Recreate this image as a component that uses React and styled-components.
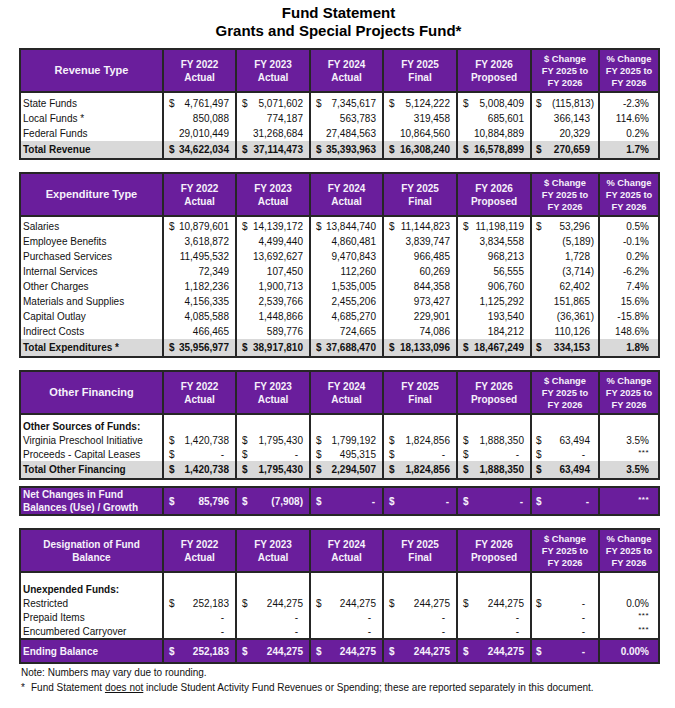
import React from "react";
import styled, { createGlobalStyle } from "styled-components";

const PURPLE = "#6a1e9c";
const LINE = "#262626";
const GREY = "#d9d9d9";

const GlobalStyle = createGlobalStyle`
  body {
    margin: 0;
    background: #fff;
    font-family: "Liberation Sans", Arial, sans-serif;
    color: #111;
  }
`;

const Page = styled.div`
  width: 675px;
  box-sizing: border-box;
  padding: 4px 17px 0 19px;
`;

const Title = styled.h1`
  margin: 0 0 8px;
  text-align: center;
  font-size: 15px;
  line-height: 18px;
  font-weight: bold;
  color: #000;
`;

const Table = styled.table`
  width: 639px;
  table-layout: fixed;
  border-collapse: collapse;
  border: 2px solid ${LINE};
  margin-bottom: ${p => p.$gap}px;
`;

const HeadCell = styled.th`
  background: ${PURPLE};
  color: #f6f1fb;
  font-weight: bold;
  font-size: ${p => p.$size}px;
  line-height: ${p => p.$lh}px;
  text-align: center;
  vertical-align: middle;
  border: 2px solid ${LINE};
  padding: 0 2px;
  height: ${p => p.$h}px;
`;

const Row = styled.tr`
  height: ${p => p.$h}px;
  background: ${p =>
    p.$tone === "total" ? GREY : p.$tone === "purple" ? PURPLE : "#fff"};
  color: ${p => (p.$tone === "purple" ? "#f6f1fb" : "#111")};
  font-weight: ${p => (p.$tone === "item" ? "normal" : "bold")};
`;

const Cell = styled.td`
  border-left: 2px solid ${LINE};
  border-right: 2px solid ${LINE};
  border-top: ${p => (p.$top ? `2px solid ${LINE}` : "none")};
  padding: 0 ${p => p.$pr}px 0 ${p => p.$pl}px;
  font-size: 10px;
  line-height: ${p => p.$lh || 13}px;
  white-space: nowrap;
  text-align: ${p => p.$align || "left"};
  vertical-align: middle;
  overflow: hidden;
`;

const Money = styled.div`
  display: flex;
  justify-content: space-between;
  align-items: baseline;
`;

const Dash = styled.span`
  margin-right: ${p => (p.$tight ? 1 : 5)}px;
`;

const Neg = styled.span`
  margin-right: ${p => (p.$shift ? -4 : 0)}px;
`;

const Stars = styled.span`
  font-size: 8px;
  letter-spacing: 0.5px;
  position: relative;
  top: -2px;
`;

const Notes = styled.div`
  font-size: 10px;
  line-height: 15px;
  color: #111;
  padding: 1px 0 0 2px;
`;

const Star = styled.span`
  display: inline-block;
  width: 10px;
`;

const cols = [143, 73, 74, 73, 74, 74, 68, 60];

const yearHeads = [
  ["FY 2022", "Actual"],
  ["FY 2023", "Actual"],
  ["FY 2024", "Actual"],
  ["FY 2025", "Final"],
  ["FY 2026", "Proposed"]
];

const Lines = ({ lines }) =>
  lines.map((l, i) => (
    <React.Fragment key={i}>
      {i > 0 && <br />}
      {l}
    </React.Fragment>
  ));

function Head({ label, labelSize }) {
  return (
    <thead>
      <tr>
        <HeadCell $size={labelSize} $lh={13} $h={41}>
          <Lines lines={label} />
        </HeadCell>
        {yearHeads.map(h => (
          <HeadCell key={h[0]} $size={10} $lh={13} $h={41}>
            <Lines lines={h} />
          </HeadCell>
        ))}
        <HeadCell $size={9.3} $lh={12} $h={41}>
          <Lines lines={["$ Change", "FY 2025 to", "FY 2026"]} />
        </HeadCell>
        <HeadCell $size={9.3} $lh={12} $h={41}>
          <Lines lines={["% Change", "FY 2025 to", "FY 2026"]} />
        </HeadCell>
      </tr>
    </thead>
  );
}

function Value({ text, col, tight }) {
  let dollar = false;
  let v = text;
  if (v.startsWith("$")) {
    dollar = true;
    v = v.slice(1);
  }
  let shown;
  if (v === "-") shown = <Dash $tight={tight}>-</Dash>;
  else if (v.startsWith("(")) shown = <Neg $shift={col === 6}>{v}</Neg>;
  else shown = <span>{v}</span>;
  return (
    <Money>
      <span>{dollar ? "$" : ""}</span>
      {shown}
    </Money>
  );
}

function DataRow({ row, h, top }) {
  const [label, ...vals] = row.cells;
  return (
    <Row $h={h} $tone={row.tone}>
      <Cell $pl={2} $pr={2} $top={top} $lh={row.lh}>
        {label}
      </Cell>
      {vals.map((v, i) => {
        const col = i + 1;
        if (col === 7) {
          return (
            <Cell key={i} $pl={2} $pr={9} $align="right" $top={top}>
              {v === "***" ? <Stars>***</Stars> : v}
            </Cell>
          );
        }
        return (
          <Cell key={i} $pl={col === 6 ? 4 : 5} $pr={col === 6 ? 8 : 6} $top={top}>
            {v !== "" && <Value text={v} col={col} tight={row.tightDash} />}
          </Cell>
        );
      })}
    </Row>
  );
}

function Spacer({ h }) {
  return (
    <Row $h={h} $tone="item">
      {cols.map((c, i) => (
        <Cell key={i} $pl={0} $pr={0} $lh={1} />
      ))}
    </Row>
  );
}

function Section({ label, labelSize = 11, pad, rows, rowH, total, totalH, totalTop, gap }) {
  return (
    <Table $gap={gap}>
      <colgroup>
        {cols.map((w, i) => (
          <col key={i} style={{ width: w }} />
        ))}
      </colgroup>
      <Head label={label} labelSize={labelSize} />
      <tbody>
        <Spacer h={pad} />
        {rows.map((r, i) => (
          <DataRow key={i} row={r} h={rowH} />
        ))}
        <DataRow row={total} h={totalH} top={totalTop} />
      </tbody>
    </Table>
  );
}

const item = cells => ({ tone: "item", cells });
const sub = label => ({ tone: "sub", cells: [label, "", "", "", "", "", "", ""] });

const revenue = [
  item(["State Funds", "$4,761,497", "$5,071,602", "$7,345,617", "$5,124,222", "$5,008,409", "$(115,813)", "-2.3%"]),
  item(["Local Funds *", "850,088", "774,187", "563,783", "319,458", "685,601", "366,143", "114.6%"]),
  item(["Federal Funds", "29,010,449", "31,268,684", "27,484,563", "10,864,560", "10,884,889", "20,329", "0.2%"])
];

const expenditures = [
  item(["Salaries", "$10,879,601", "$14,139,172", "$13,844,740", "$11,144,823", "$11,198,119", "$53,296", "0.5%"]),
  item(["Employee Benefits", "3,618,872", "4,499,440", "4,860,481", "3,839,747", "3,834,558", "(5,189)", "-0.1%"]),
  item(["Purchased Services", "11,495,532", "13,692,627", "9,470,843", "966,485", "968,213", "1,728", "0.2%"]),
  item(["Internal Services", "72,349", "107,450", "112,260", "60,269", "56,555", "(3,714)", "-6.2%"]),
  item(["Other Charges", "1,182,236", "1,900,713", "1,535,005", "844,358", "906,760", "62,402", "7.4%"]),
  item(["Materials and Supplies", "4,156,335", "2,539,766", "2,455,206", "973,427", "1,125,292", "151,865", "15.6%"]),
  item(["Capital Outlay", "4,085,588", "1,448,866", "4,685,270", "229,901", "193,540", "(36,361)", "-15.8%"]),
  item(["Indirect Costs", "466,465", "589,776", "724,665", "74,086", "184,212", "110,126", "148.6%"])
];

const financing = [
  sub("Other Sources of Funds:"),
  item(["Virginia Preschool Initiative", "$1,420,738", "$1,795,430", "$1,799,192", "$1,824,856", "$1,888,350", "$63,494", "3.5%"]),
  item(["Proceeds - Capital Leases", "$-", "$-", "$495,315", "$-", "$-", "$-", "***"])
];

const designation = [
  sub("Unexpended Funds:"),
  item(["Restricted", "$252,183", "$244,275", "$244,275", "$244,275", "$244,275", "$-", "0.0%"]),
  item(["Prepaid Items", "-", "-", "-", "-", "-", "-", "***"]),
  item(["Encumbered Carryover", "-", "-", "-", "-", "-", "-", "***"])
];

const netRow = {
  tone: "purple",
  lh: 13,
  tightDash: true,
  cells: [
    <Lines key="n" lines={["Net Changes in Fund", "Balances (Use) / Growth"]} />,
    "$85,796", "$(7,908)", "$-", "$-", "$-", "$-", "***"
  ]
};

export default function App() {
  return (
    <Page>
      <GlobalStyle />
      <Title>
        Fund Statement
        <br />
        Grants and Special Projects Fund*
      </Title>

      <Section
        label={["Revenue Type"]}
        pad={4}
        rows={revenue}
        rowH={15}
        total={{ tone: "total", cells: ["Total Revenue", "$34,622,034", "$37,114,473", "$35,393,963", "$16,308,240", "$16,578,899", "$270,659", "1.7%"] }}
        totalH={18}
        gap={12}
      />

      <Section
        label={["Expenditure Type"]}
        pad={3}
        rows={expenditures}
        rowH={15}
        total={{ tone: "total", cells: ["Total Expenditures *", "$35,956,977", "$38,917,810", "$37,688,470", "$18,133,096", "$18,467,249", "$334,153", "1.8%"] }}
        totalH={18}
        gap={12}
      />

      <Section
        label={["Other Financing"]}
        pad={5}
        rows={financing}
        rowH={14}
        total={{ tone: "total", cells: ["Total Other Financing", "$1,420,738", "$1,795,430", "$2,294,507", "$1,824,856", "$1,888,350", "$63,494", "3.5%"] }}
        totalH={18}
        gap={6}
      />

      <Table $gap={12}>
        <colgroup>
          {cols.map((w, i) => (
            <col key={i} style={{ width: w }} />
          ))}
        </colgroup>
        <tbody>
          <DataRow row={netRow} h={24} />
        </tbody>
      </Table>

      <Section
        label={["Designation of Fund", "Balance"]}
        labelSize={10}
        pad={10}
        rows={designation}
        rowH={14}
        total={{ tone: "purple", cells: ["Ending Balance", "$252,183", "$244,275", "$244,275", "$244,275", "$244,275", "$-", "0.00%"] }}
        totalH={24}
        totalTop
        gap={0}
      />

      <Notes>
        <div>Note: Numbers may vary due to rounding.</div>
        <div>
          <Star>*</Star>Fund Statement <u>does not</u> include Student Activity Fund
          Revenues or Spending; these are reported separately in this document.
        </div>
      </Notes>
    </Page>
  );
}
